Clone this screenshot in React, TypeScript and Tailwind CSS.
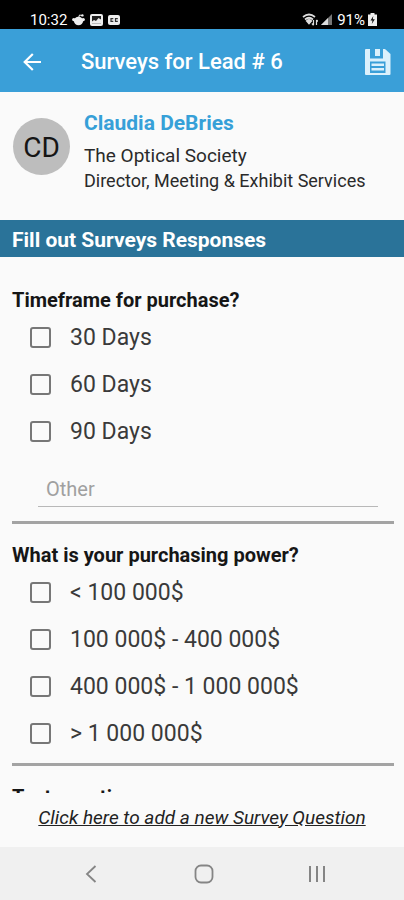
import { useState } from "react";

type Question = {
  id: string;
  title: string;
  options: string[];
  other?: boolean;
};

const questions: Question[] = [
  {
    id: "timeframe",
    title: "Timeframe for purchase?",
    options: ["30 Days", "60 Days", "90 Days"],
    other: true,
  },
  {
    id: "power",
    title: "What is your purchasing power?",
    options: ["< 100 000$", "100 000$ - 400 000$", "400 000$ - 1 000 000$", "> 1 000 000$"],
  },
  { id: "test", title: "Test question", options: [] },
];

function StatusBar() {
  return (
    <div className="flex h-[29px] shrink-0 items-center justify-between bg-black pr-[27px] pl-[30px] pt-[10px] text-white">
      <div className="flex items-center gap-[5px]">
        <span className="text-[15px] leading-[18px]">10:32</span>
        <svg width="13" height="14" viewBox="0 0 13 14" fill="#eee" aria-hidden="true">
          <ellipse cx="6.5" cy="8" rx="4.6" ry="4.2" />
          <circle cx="1.8" cy="6.6" r="1.7" />
          <circle cx="11.2" cy="6.6" r="1.7" />
          <path d="M6.5 5 7.5 2l2.5.5" fill="none" stroke="#eee" />
          <circle cx="10.4" cy="2.4" r="1.2" />
        </svg>
        <svg width="13" height="12" viewBox="0 0 13 12" aria-hidden="true">
          <rect width="13" height="12" rx="2" fill="#eee" />
          <path d="M2 2h9v3.500L8.500 4 6 7 4 6 2 7.500z" fill="#222" />
          <path d="M2 9.500h9" stroke="#bbb" />
        </svg>
        <svg width="12" height="10" viewBox="0 0 12 10" aria-hidden="true">
          <rect width="12" height="10" rx="2" fill="#eee" />
          <path d="M5.300 3.700H3v2.600h2.300M9.800 3.700H7.500v2.600h2.300" fill="none" stroke="#333" strokeWidth="1.200" />
        </svg>
      </div>
      <div className="flex items-center gap-[3px]">
        <svg width="16" height="13" viewBox="0 0 16 13" fill="none" stroke="#ddd" strokeWidth="1.700" aria-hidden="true">
          <path d="M1 4Q7 -1 13 4M3 6.500Q7 3 11 6.500" />
          <path d="M4.800 8 7 10.500 9.200 8Q7 6 4.800 8z" fill="#ddd" />
          <path d="M11.500 7v5M9.900 10.500l1.600 1.800M14.500 12V7M16 8.500l-1.500-1.700" strokeWidth="1.200" />
        </svg>
        <svg width="11" height="11" viewBox="0 0 11 11" aria-hidden="true">
          <path d="M0 11 11 0v11z" fill="#777" />
          <path d="M0 11 7 4v7z" fill="#ddd" />
        </svg>
        <span className="pl-0.5 text-[15px] leading-[18px]">91%</span>
        <svg width="9" height="13" viewBox="0 0 9 13" aria-hidden="true">
          <path d="M2.500 0h4v1.500H9V13H0V1.500h2.500z" fill="#eee" />
          <path d="M5.300 3 2.500 7.500h2L3.800 11l3-4.800h-2z" fill="#111" />
        </svg>
      </div>
    </div>
  );
}

function AppBar() {
  return (
    <header className="flex h-[63px] shrink-0 items-center bg-[#3a9fd8] px-3 pt-0.5 text-white">
      <button type="button" aria-label="Back" className="flex size-10 items-center justify-center">
        <svg width="18" height="18" viewBox="0 0 18 18" fill="none" stroke="currentColor" strokeWidth="2.200" aria-hidden="true">
          <path d="M18 9H2M9.800 1 1.700 9l8.100 8" />
        </svg>
      </button>
      <h1 className="ml-[29px] flex-1 text-[22px] leading-7 font-medium whitespace-nowrap">Surveys for Lead # 6</h1>
      <button type="button" aria-label="Save" className="flex h-10 w-7 items-center justify-center">
        <svg width="26" height="26" viewBox="0 0 26 26" aria-hidden="true">
          <path d="M1 0h19l5.500 5v20a1 1 0 0 1-1 1H1a1 1 0 0 1-1-1V1a1 1 0 0 1 1-1z" fill="#dcf1fc" />
          <path d="M5 0h13v9.500H5z" fill="#3a9fd8" />
          <path d="M10 0h5v7h-5z" fill="#dcf1fc" />
          <path d="M5 12.500h15.500v11.500H5z" fill="#3a9fd8" />
          <path d="M6.500 14.500h12.500v2.500H6.500zM6.500 19h12.500v2.500H6.500z" fill="#dcf1fc" />
        </svg>
      </button>
    </header>
  );
}

function Contact() {
  return (
    <section className="flex h-32 shrink-0 gap-[14px] pt-[17px] pl-[13px]">
      <div className="mt-[9px] flex size-[57px] shrink-0 items-center justify-center rounded-full bg-[#bdbdbd] pt-0.5 text-[28px] text-[#151515]">
        CD
      </div>
      <div className="min-w-0 text-[#2a2a2a]">
        <h2 className="mb-[6px] text-[21px] leading-7 font-bold text-[#36a0d8]">Claudia DeBries</h2>
        <p className="text-[19px] leading-[25px]">The Optical Society</p>
        <p className="text-[18px] leading-[25px] whitespace-nowrap">Director, Meeting &amp; Exhibit Services</p>
      </div>
    </section>
  );
}

function QuestionBlock({ question }: { question: Question }) {
  return (
    <fieldset className="mr-[10px] ml-3 border-b-3 border-[#a3a3a3] pt-[19px]">
      <legend className="float-left mb-px w-full text-[20px] leading-[25px] font-bold text-[#161616]">
        {question.title}
      </legend>
      {question.options.map((option) => (
        <label key={option} className="clear-both flex h-[47px] items-center gap-[19px] pl-[18px] text-[23px] text-[#3a3a3a]">
          <input
            type="checkbox"
            name={question.id}
            className="size-[21px] shrink-0 appearance-none rounded-[3px] border-2 border-[#777] checked:bg-[#3a9fd8]"
          />
          <span className="pt-0.5">{option}</span>
        </label>
      ))}
      {question.other ? (
        <div className="pt-4 pr-4 pb-[14px] pl-[26px]">
          <input
            type="text"
            aria-label="Other"
            placeholder="Other"
            className="block h-9 w-full border-b border-[#b8b8b8] bg-transparent px-2 text-xl outline-none placeholder:text-[#a0a0a0]"
          />
        </div>
      ) : (
        <div className="clear-both h-[6px]" />
      )}
    </fieldset>
  );
}

function NavBar() {
  return (
    <nav className="flex h-[53px] shrink-0 items-center justify-center gap-[73px] bg-[#f0f0f0] pl-1 text-[#858585]">
      <button type="button" aria-label="System back" className="flex size-10 items-center justify-center">
        <svg width="12" height="18" viewBox="0 0 12 18" fill="none" stroke="currentColor" strokeWidth="1.800" aria-hidden="true">
          <path d="M10.500 1 2 9l8.500 8" />
        </svg>
      </button>
      <button type="button" aria-label="Home" className="flex size-10 items-center justify-center">
        <svg width="20" height="20" viewBox="0 0 20 20" fill="none" stroke="currentColor" strokeWidth="1.800" aria-hidden="true">
          <rect x="1.500" y="1.500" width="17" height="17" rx="5.500" />
        </svg>
      </button>
      <button type="button" aria-label="Recent apps" className="flex size-10 items-center justify-center">
        <svg width="18" height="18" viewBox="0 0 18 18" fill="none" stroke="currentColor" strokeWidth="2" aria-hidden="true">
          <path d="M2 1v16M9 1v16M16 1v16" />
        </svg>
      </button>
    </nav>
  );
}

export default function App() {
  const [editing, setEditing] = useState(false);
  return (
    <div className="flex h-screen flex-col overflow-hidden bg-[#fafafa] font-[Roboto,sans-serif]">
      <StatusBar />
      <AppBar />
      <Contact />
      <h2 className="shrink-0 bg-[#2a7399] px-3 pt-[6px] pb-0.5 text-[21px] leading-[29px] font-bold text-white">
        Fill out Surveys Responses
      </h2>
      <main className="min-h-0 flex-1 overflow-x-hidden overflow-y-auto pt-3 [scrollbar-width:none]">
        {questions.map((question) => (
          <QuestionBlock key={question.id} question={question} />
        ))}
      </main>
      <footer className="flex h-[54px] shrink-0 items-center justify-center pb-[6px]">
        <button
          type="button"
          aria-pressed={editing}
          onClick={() => setEditing(!editing)}
          className="text-[19px] leading-[25px] whitespace-nowrap text-[#222] italic underline"
        >
          Click here to add a new Survey Question
        </button>
      </footer>
      <NavBar />
    </div>
  );
}
